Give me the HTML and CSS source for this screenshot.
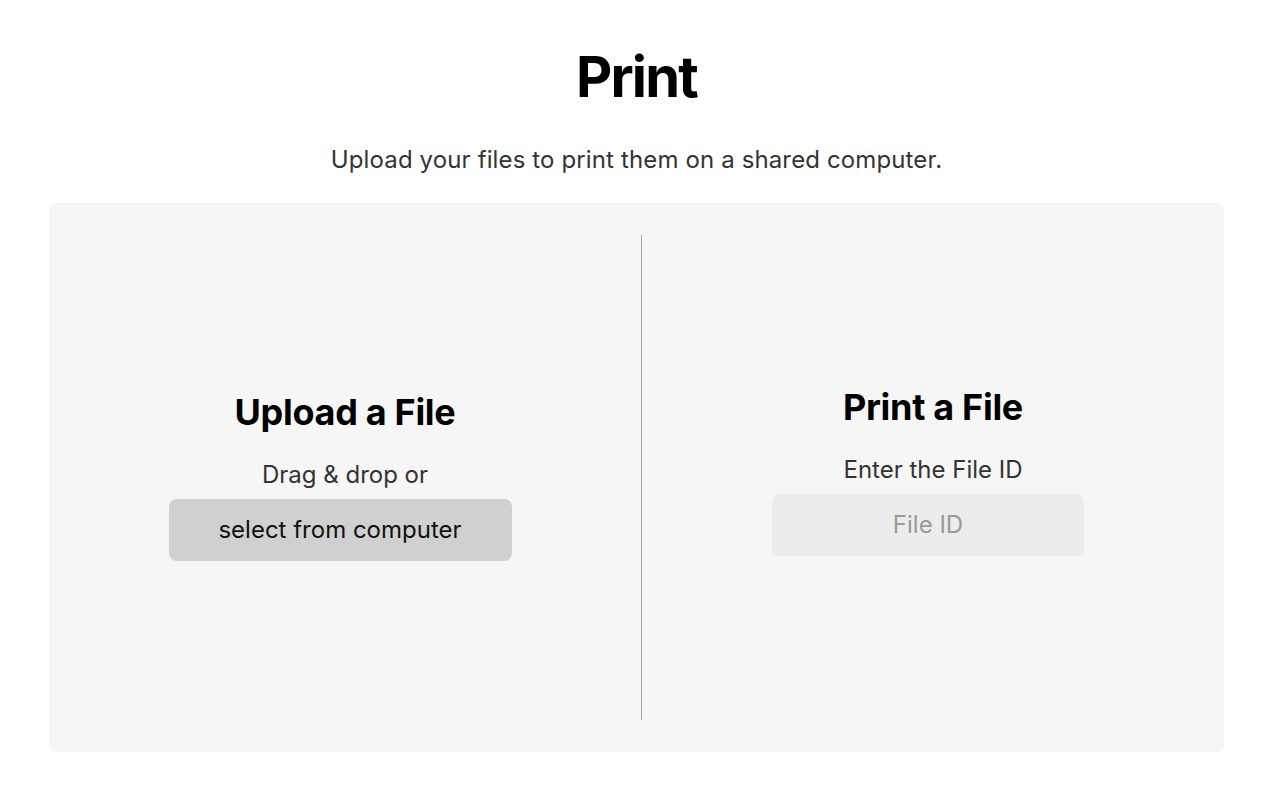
FILE: index.html
```html
<!DOCTYPE html>
<html lang="en">

<head>
    <meta charset="UTF-8">
    <meta name="viewport" content="width=device-width, initial-scale=1.0">
    <title>Print</title>
    <link rel="stylesheet" href="styles.css">
</head>

<body>
    <div class="page">
        <h1>Print</h1>
        <p class="subtitle">Upload your files to print them on a shared computer.</p>

        <div class="card">
            <div class="column upload">
                <h2>Upload a File</h2>
                <p class="hint">Drag &amp; drop or</p>
                <button class="select-btn">select from computer</button>
            </div>

            <div class="divider"></div>

            <div class="column print">
                <h2>Print a File</h2>
                <p class="hint">Enter the File ID</p>
                <input type="text" class="file-id" placeholder="File ID">
            </div>
        </div>
    </div>
</body>

</html>
```

FILE: styles.css
```css
body {
    margin: 0;
    font-family: 'Inter', 'Noto Sans', sans-serif;
    background: #ffffff;
    color: #000;
}

.page {
    padding: 44px 56px 0 49px;
    text-align: center;
}

h1 {
    font-size: 56px;
    font-weight: 700;
    line-height: 66px;
    margin: 0;
    letter-spacing: -1.8px;
}

.subtitle {
    font-size: 24px;
    line-height: 30px;
    color: #333;
    margin: 35px 0 28px 0;
    letter-spacing: 0.13px;
}

.card {
    background: #f6f6f6;
    border-radius: 8px;
    height: 549px;
    padding: 32px 0;
    box-sizing: border-box;
    display: grid;
    grid-template-columns: 592px 1px 1fr;
}

.divider {
    background: #a8a8a8;
}

.column {
    display: flex;
    flex-direction: column;
    align-items: center;
    justify-content: center;
}

.upload {
    padding-bottom: 5px;
}

.print {
    padding-bottom: 15px;
}

h2 {
    font-size: 36px;
    font-weight: 700;
    line-height: 44px;
    margin: 0;
    letter-spacing: -0.3px;
}

.hint {
    font-size: 24px;
    line-height: 30px;
    color: #333;
    margin: 26px 0 9px 0;
}

.select-btn {
    width: 343px;
    height: 62px;
    border: none;
    border-radius: 8px;
    background: #d0d0d0;
    font-family: inherit;
    font-size: 24px;
    color: #111;
    cursor: pointer;
    margin-left: -10px;
}

.file-id {
    width: 312px;
    height: 62px;
    box-sizing: border-box;
    border: none;
    border-radius: 8px;
    background: #ececec;
    font-family: inherit;
    font-size: 24px;
    text-align: center;
    color: #333;
    margin-left: -10px;
}

.file-id::placeholder {
    color: #999;
}
```
